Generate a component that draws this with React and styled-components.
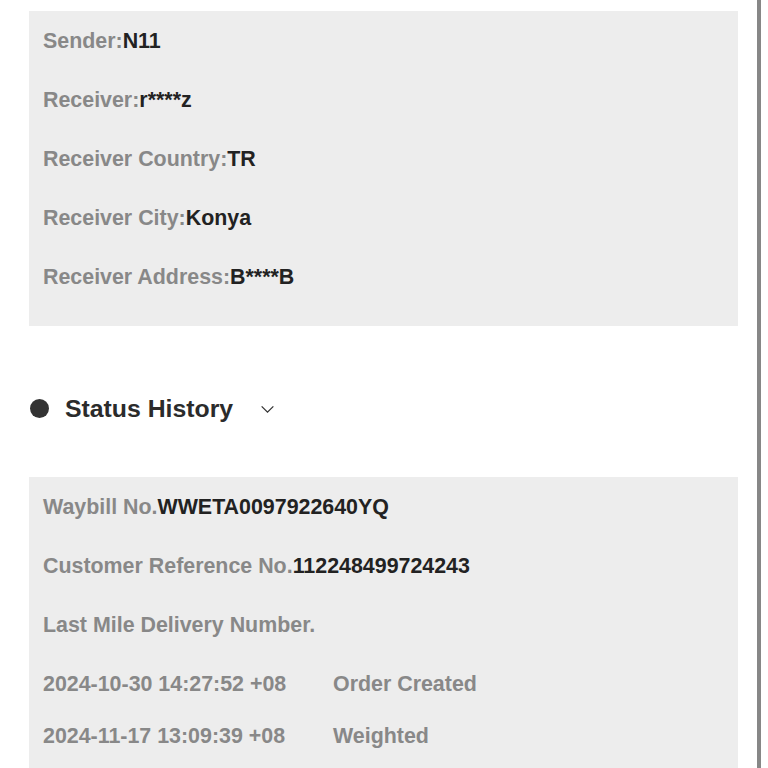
import * as React from "react"
import styled, { createGlobalStyle } from "styled-components"

const GlobalStyle = createGlobalStyle`
  html, body {
    margin: 0;
    padding: 0;
    background: #ffffff;
    font-family: "Liberation Sans", Arial, sans-serif;
  }
`

const receiver = [
  { label: "Sender:", value: "N11" },
  { label: "Receiver:", value: "r****z" },
  { label: "Receiver Country:", value: "TR" },
  { label: "Receiver City:", value: "Konya" },
  { label: "Receiver Address:", value: "B****B" },
]

const waybill = [
  { label: "Waybill No.", value: "WWETA0097922640YQ" },
  { label: "Customer Reference No.", value: "112248499724243" },
  { label: "Last Mile Delivery Number.", value: "" },
]

const history = [
  { time: "2024-10-30 14:27:52 +08", status: "Order Created" },
  { time: "2024-11-17 13:09:39 +08", status: "Weighted" },
]

export default function App() {
  return (
    <>
      <GlobalStyle />
      <Page>
        <Content>
          <Card $bottom={19}>
            {receiver.map((r) => (
              <InfoRow key={r.label}>
                <Label>{r.label}</Label>
                <Value>{r.value}</Value>
              </InfoRow>
            ))}
          </Card>

          <SectionHeader>
            <Dot />
            <SectionTitle>Status History</SectionTitle>
            <Chevron viewBox="0 0 16 10" width="15" height="9">
              <path d="M1.5 1.5 L8 8 L14.5 1.5" fill="none" stroke="#333" strokeWidth="1.4" />
            </Chevron>
          </SectionHeader>

          <Card $bottom={0} $grow>
            {waybill.map((r) => (
              <InfoRow key={r.label}>
                <Label>{r.label}</Label>
                <Value>{r.value}</Value>
              </InfoRow>
            ))}
            <HistoryList>
              {history.map((h) => (
                <HistoryRow key={h.time}>
                  <Label>{h.time}</Label>
                  <Label>{h.status}</Label>
                </HistoryRow>
              ))}
            </HistoryList>
          </Card>
        </Content>
        <Rule />
      </Page>
    </>
  )
}

const Page = styled.div`
  display: flex;
  height: 768px;
  padding-left: 29px;
  overflow: hidden;
`

const Content = styled.div`
  width: 709px;
  padding-top: 11px;
  display: flex;
  flex-direction: column;
`

const Rule = styled.div`
  width: 4px;
  margin-left: 19px;
  background: #878787;
  align-self: stretch;
`

const Card = styled.section`
  background: #ededed;
  padding: 1px 14px ${(p) => p.$bottom}px;
  display: flex;
  flex-direction: column;
  flex: ${(p) => (p.$grow ? "1 0 auto" : "0 0 auto")};
`

const InfoRow = styled.div`
  height: 59px;
  display: flex;
  align-items: center;
  font-size: 21.4px;
  font-weight: bold;
  white-space: nowrap;
`

const Label = styled.span`
  color: #888888;
`

const Value = styled.span`
  color: #222222;
`

const SectionHeader = styled.div`
  box-sizing: border-box;
  display: flex;
  align-items: center;
  height: 151px;
  padding-top: 14px;
`

const Dot = styled.span`
  width: 19px;
  height: 19px;
  border-radius: 50%;
  background: #333333;
  margin-left: 1px;
`

const SectionTitle = styled.h2`
  margin: 0 0 0 16px;
  font-size: 24.8px;
  font-weight: bold;
  color: #2b2b2b;
`

const Chevron = styled.svg`
  margin-left: 27px;
  margin-top: 1px;
`

const HistoryList = styled.div`
  padding-top: 3px;
  display: flex;
  flex-direction: column;
`

const HistoryRow = styled.div`
  height: 52px;
  display: grid;
  grid-template-columns: 290px auto;
  align-items: center;
  font-size: 21.4px;
  font-weight: bold;
  white-space: nowrap;
`
